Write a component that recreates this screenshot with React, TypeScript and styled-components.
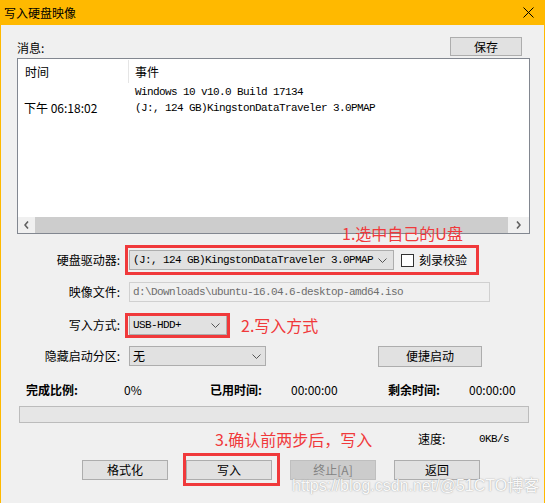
import React from 'react';
import styled, { createGlobalStyle } from 'styled-components';

const ui = `"Noto Sans CJK SC", "Microsoft YaHei", sans-serif`;
const mono = `"Liberation Mono", "Noto Sans CJK SC", monospace`;
const red = '#f0393b';

const GlobalStyle = createGlobalStyle`
  html, body {
    margin: 0;
    padding: 0;
    background: #f0f0f0;
  }
  body {
    font-family: ${ui};
    font-size: 12px;
    color: #000;
  }
`;

const Window = styled.div`
  position: relative;
  width: 545px;
  height: 503px;
  box-sizing: border-box;
  border-left: 1px solid #ffb900;
  border-right: 1px solid #ffb900;
  background: #f0f0f0;
  overflow: hidden;
  display: flex;
  flex-direction: column;
`;

const TitleBar = styled.div`
  height: 25px;
  flex: none;
  background: #ffb900;
  display: flex;
  align-items: center;
  justify-content: space-between;
  padding: 0 10px 0 3px;
  line-height: 25px;
`;

const TopRow = styled.div`
  margin-top: 12px;
  height: 19px;
  padding: 0 22px 0 16px;
  display: flex;
  justify-content: space-between;
`;

const Caption = styled.span`
  margin-top: 3px;
  line-height: 16px;
`;

const Button = styled.div<{ $w: number; $h?: number; $ml?: number; $disabled?: boolean }>`
  box-sizing: border-box;
  width: ${(p) => p.$w}px;
  height: ${(p) => p.$h ?? 19}px;
  margin-left: ${(p) => p.$ml ?? 0}px;
  border: 1px solid ${(p) => (p.$disabled ? '#bfbfbf' : '#adadad')};
  background: ${(p) => (p.$disabled ? '#cccccc' : '#e1e1e1')};
  color: ${(p) => (p.$disabled ? '#838383' : '#000')};
  display: flex;
  align-items: center;
  justify-content: center;
  font-size: 12px;
  line-height: 14px;
`;

const ListBox = styled.div`
  margin: 2px 0 0 16px;
  width: 513px;
  height: 176px;
  box-sizing: border-box;
  border: 1px solid #828790;
  background: #fff;
  display: flex;
  flex-direction: column;
`;

const ListHeader = styled.div`
  height: 25px;
  display: flex;
  line-height: 25px;
`;

const HeadCell = styled.div<{ $w?: number; $pad: number }>`
  width: ${(p) => (p.$w ? `${p.$w}px` : 'auto')};
  padding-left: ${(p) => p.$pad}px;
  box-sizing: border-box;
`;

const HeadSep = styled.div`
  width: 1px;
  height: 23px;
  margin-top: 1px;
  background: #e5e5e5;
`;

const ListBody = styled.div`
  flex: 1;
`;

const ListRow = styled.div`
  height: 16px;
  display: flex;
  line-height: 16px;
`;

const TimeCell = styled.div`
  width: 111px;
  padding-left: 6px;
  box-sizing: border-box;
`;

const MonoText = styled.span`
  font-family: ${mono};
  font-size: 11px;
  letter-spacing: -0.6px;
  white-space: pre;
`;

const EventCell = styled(MonoText)`
  padding-left: 6px;
`;

const HScroll = styled.div`
  height: 16px;
  display: flex;
  background: #f0f0f0;
`;

const ScrollArrow = styled.div<{ $w: number }>`
  width: ${(p) => p.$w}px;
  display: flex;
  align-items: center;
  justify-content: center;
`;

const ScrollThumb = styled.div`
  flex: 1;
  background: #cdcdcd;
`;

const FormRow = styled.div<{ $top: number; $h?: number }>`
  margin-top: ${(p) => p.$top}px;
  height: ${(p) => p.$h ?? 20}px;
  display: flex;
  align-items: center;
`;

const FieldLabel = styled.div`
  width: 119px;
  text-align: right;
  line-height: 16px;
  margin-right: 9px;
  flex: none;
`;

const Highlight = styled.div<{ $inset: string }>`
  position: relative;
  display: flex;
  align-items: center;
  &::after {
    content: '';
    position: absolute;
    inset: ${(p) => p.$inset};
    border: 3px solid ${red};
    pointer-events: none;
  }
`;

const Combo = styled.div<{ $w: number; $pr?: number }>`
  box-sizing: border-box;
  width: ${(p) => p.$w}px;
  height: 20px;
  border: 1px solid #adadad;
  background: #e1e1e1;
  display: flex;
  align-items: center;
  justify-content: space-between;
  padding: 0 ${(p) => p.$pr ?? 6}px 0 3px;
  line-height: 16px;
`;

const TextBox = styled.div`
  box-sizing: border-box;
  width: 361px;
  height: 20px;
  border: 1px solid #d0d0d0;
  background: #f0f0f0;
  color: #6d6d6d;
  display: flex;
  align-items: center;
  padding-left: 3px;
`;

const CheckWrap = styled.label`
  display: flex;
  align-items: center;
  margin-left: 7px;
  gap: 5px;
  line-height: 16px;
`;

const CheckBox = styled.span`
  width: 13px;
  height: 13px;
  box-sizing: border-box;
  border: 1px solid #333;
  background: #fff;
`;

// red annotation text; $mt pulls the first note up onto the list's border
const RedNote = styled.div<{ $ml?: number; $mt?: number }>`
  margin-left: ${(p) => p.$ml ?? 0}px;
  margin-top: ${(p) => p.$mt ?? 0}px;
  color: ${red};
  font-size: 16px;
  line-height: 20px;
  white-space: nowrap;
`;

const StatsRow = styled.div`
  margin-top: 16px;
  height: 16px;
  padding-left: 25px;
  display: grid;
  grid-template-columns: 98px 86px 81px 97px 81px auto;
  line-height: 16px;
`;

const StatLabel = styled.span`
  font-weight: 700;
`;

const Progress = styled.div`
  margin: 8px 0 0 18px;
  width: 510px;
  height: 17px;
  box-sizing: border-box;
  border: 1px solid #bcbcbc;
  background: #e6e6e6;
`;

const NoteRow = styled.div`
  margin-top: 6px;
  height: 20px;
  padding-left: 214px;
  display: grid;
  grid-template-columns: 203px 61px auto;
  align-items: center;
  line-height: 20px;
`;

const ButtonRow = styled.div`
  margin-top: 11px;
  height: 20px;
  padding-left: 81px;
  display: flex;
  gap: 18px;
`;

const Watermark = styled.div`
  position: absolute;
  left: 291px;
  top: 477px;
  font-family: "Liberation Sans", "Noto Sans CJK SC", sans-serif;
  font-size: 16px;
  line-height: 18px;
  color: rgba(255, 255, 255, 0.95);
  text-shadow: 0 0 1px rgba(120, 120, 120, 0.6), 0 0 2px rgba(150, 150, 150, 0.4);
  white-space: nowrap;
  pointer-events: none;
`;

const Chevron = () => (
  <svg width="9" height="5" viewBox="0 0 9 5">
    <polyline points="0.5,0.5 4.5,4.5 8.5,0.5" fill="none" stroke="#555" strokeWidth="1" />
  </svg>
);

const Arrow = ({ dir }: { dir: 'left' | 'right' }) => (
  <svg width="5" height="8" viewBox="0 0 5 8">
    <polyline
      points={dir === 'left' ? '4,0.5 1,4 4,7.5' : '1,0.5 4,4 1,7.5'}
      fill="none"
      stroke="#606060"
      strokeWidth="1.6"
    />
  </svg>
);

const CloseIcon = () => (
  <svg width="11" height="11" viewBox="0 0 11 11">
    <path d="M0.5 0.5 L10.5 10.5 M10.5 0.5 L0.5 10.5" stroke="#000" strokeWidth="1" />
  </svg>
);

export default function App() {
  return (
    <>
      <GlobalStyle />
      <Window>
        <TitleBar>
          <span>写入硬盘映像</span>
          <CloseIcon />
        </TitleBar>

        <TopRow>
          <Caption>消息:</Caption>
          <Button $w={72}>保存</Button>
        </TopRow>

        <ListBox>
          <ListHeader>
            <HeadCell $w={110} $pad={7}>时间</HeadCell>
            <HeadSep />
            <HeadCell $pad={6}>事件</HeadCell>
          </ListHeader>
          <ListBody>
            <ListRow>
              <TimeCell />
              <EventCell>Windows 10 v10.0 Build 17134</EventCell>
            </ListRow>
            <ListRow>
              <TimeCell>下午 06:18:02</TimeCell>
              <EventCell>(J:, 124 GB)KingstonDataTraveler 3.0PMAP</EventCell>
            </ListRow>
          </ListBody>
          <HScroll>
            <ScrollArrow $w={17}>
              <Arrow dir="left" />
            </ScrollArrow>
            <ScrollThumb />
            <ScrollArrow $w={21}>
              <Arrow dir="right" />
            </ScrollArrow>
          </HScroll>
        </ListBox>

        <FormRow $top={16}>
          <FieldLabel>硬盘驱动器:</FieldLabel>
          <Highlight $inset="-5px -12px -5px -4px">
            <Combo $w={265}>
              <MonoText>(J:, 124 GB)KingstonDataTraveler 3.0PMAP</MonoText>
              <Chevron />
            </Combo>
            <CheckWrap>
              <CheckBox />
              刻录校验
            </CheckWrap>
          </Highlight>
          <RedNote $ml={-125} $mt={-54}>
            1.选中自己的U盘
          </RedNote>
        </FormRow>

        <FormRow $top={12}>
          <FieldLabel>映像文件:</FieldLabel>
          <TextBox>
            <MonoText>d:\Downloads\ubuntu-16.04.6-desktop-amd64.iso</MonoText>
          </TextBox>
        </FormRow>

        <FormRow $top={13}>
          <FieldLabel>写入方式:</FieldLabel>
          <Highlight $inset="-2px -3px -3px -4px">
            <Combo $w={98}>
              <MonoText>USB-HDD+</MonoText>
              <Chevron />
            </Combo>
          </Highlight>
          <RedNote $ml={14}>2.写入方式</RedNote>
        </FormRow>

        <FormRow $top={11}>
          <FieldLabel>隐藏启动分区:</FieldLabel>
          <Combo $w={137} $pr={4}>
            <span>无</span>
            <Chevron />
          </Combo>
          <Button $w={104} $h={21} $ml={112}>
            便捷启动
          </Button>
        </FormRow>

        <StatsRow>
          <StatLabel>完成比例:</StatLabel>
          <span>0%</span>
          <StatLabel>已用时间:</StatLabel>
          <span>00:00:00</span>
          <StatLabel>剩余时间:</StatLabel>
          <span>00:00:00</span>
        </StatsRow>

        <Progress />

        <NoteRow>
          <RedNote>3.确认前两步后，写入</RedNote>
          <span>速度:</span>
          <MonoText>0KB/s</MonoText>
        </NoteRow>

        <ButtonRow>
          <Button $w={86} $h={20}>格式化</Button>
          <Highlight $inset="-7px -8px -6px -3px">
            <Button $w={86} $h={20}>写入</Button>
          </Highlight>
          <Button $w={86} $h={20} $disabled>终止[A]</Button>
          <Button $w={86} $h={20}>返回</Button>
        </ButtonRow>

        <Watermark>https://blog.csdn.net/@51CTO博客</Watermark>
      </Window>
    </>
  );
}
